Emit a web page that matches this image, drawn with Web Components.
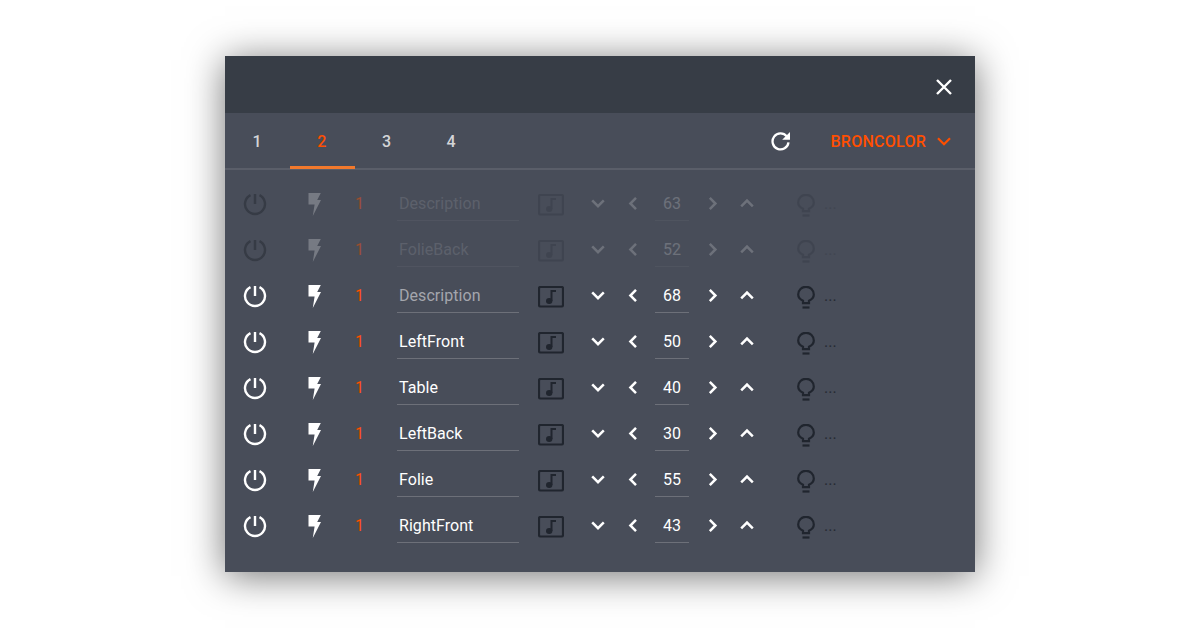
<!DOCTYPE html>
<html>
<head>
<meta charset="utf-8">
<title>Lights</title>
<style>
  html, body { margin: 0; height: 100%; background: #fff; }
  body { display: flex; justify-content: center; padding-top: 56px; box-sizing: border-box; overflow: hidden; font-family: Roboto, "Liberation Sans", sans-serif; }
</style>
</head>
<body>
<light-dialog>
  <tab-bar slot="tabs" brand="BRONCOLOR"></tab-bar>
  <light-row dim placeholder="Description" value="63"></light-row>
  <light-row dim placeholder="FolieBack" value="52"></light-row>
  <light-row placeholder="Description" value="68"></light-row>
  <light-row name="LeftFront" value="50"></light-row>
  <light-row name="Table" value="40"></light-row>
  <light-row name="LeftBack" value="30"></light-row>
  <light-row name="Folie" value="55"></light-row>
  <light-row name="RightFront" value="43"></light-row>
</light-dialog>

<script>
const ORANGE = '#ff4f00';

class LightDialog extends HTMLElement {
  constructor() {
    super();
    this.attachShadow({ mode: 'open' }).innerHTML = `
      <style>
        :host {
          display: block; width: 750px; height: 516px; background: #484d59;
          box-shadow: 0 4px 36px rgba(0,0,0,.55);
        }
        header { height: 57px; background: #373d46; display: flex; justify-content: flex-end; align-items: center; padding-right: 21px; }
        header svg { display: block; margin-top: 4px; }
        main { padding-top: 11px; }
      </style>
      <header>
        <svg width="20" height="20" viewBox="0 0 20 20" fill="none" stroke="#fff" stroke-width="2.4">
          <path d="M3 3l14 14M17 3L3 17"/>
        </svg>
      </header>
      <slot name="tabs"></slot>
      <main><slot></slot></main>`;
  }
}

class TabBar extends HTMLElement {
  constructor() {
    super();
    this.attachShadow({ mode: 'open' }).innerHTML = `
      <style>
        :host { display: flex; align-items: stretch; height: 57px; padding-top: 1px; box-sizing: border-box; border-bottom: 2px solid #5a5e69; color: #d4d5d8; font-size: 16px; }
        .tab { width: 64.5px; display: flex; align-items: center; justify-content: center; font-weight: 500; position: relative; letter-spacing: .2px; }
        .tab:first-child { width: 64px; }
        .tab.on { width: 65px; color: ${ORANGE}; }
        .tab.on::after { content: ""; position: absolute; left: 0; right: 0; bottom: -1px; height: 3px; background: #f2792c; }
        .spacer { flex: 1; }
        .reload { display: flex; align-items: center; margin-right: 40px; }
        .reload svg { display: block; }
        .brand { display: flex; align-items: center; gap: 11px; margin-right: 24px; color: ${ORANGE}; font-weight: 500; letter-spacing: .25px; }
        .brand svg { display: block; }
      </style>
      <div class="tab">1</div>
      <div class="tab on">2</div>
      <div class="tab">3</div>
      <div class="tab">4</div>
      <div class="spacer"></div>
      <div class="reload">
        <svg width="20" height="20" viewBox="0 0 20 20" fill="none">
          <path d="M15.800 5.400A8 8 0 1 0 17.500 11.400" stroke="#fff" stroke-width="2.300"/>
          <path d="M19 1v7.800H11.200z" fill="#fff"/>
        </svg>
      </div>
      <div class="brand"><span>${this.getAttribute('brand')}</span>
        <svg width="14" height="9" viewBox="0 0 14 9" fill="none" stroke="${ORANGE}" stroke-width="2.2"><path d="M1 1.3l6 6 6-6"/></svg>
      </div>`;
  }
}

class ChevronIcon extends HTMLElement {
  static paths = {
    down: 'M2.200 4.400L8 10.200l5.800-5.800',
    up: 'M3.200 10.400L9 4.600l5.800 5.800',
    left: 'M12 1.900L6.400 7.500l5.600 5.600',
    right: 'M5.800 1.900l5.600 5.600-5.600 5.600'
  };
  constructor() {
    super();
    const d = ChevronIcon.paths[this.getAttribute('dir')];
    this.attachShadow({ mode: 'open' }).innerHTML = `
      <style>
        :host { display: flex; width: 34px; justify-content: center; align-items: center; }
        svg { display: block; overflow: visible; }
      </style>
      <svg width="16" height="16" viewBox="0 0 16 16" fill="none" stroke="#fff" stroke-width="2.5"><path d="${d}"/></svg>`;
  }
}

class LightRow extends HTMLElement {
  constructor() {
    super();
    const name = this.getAttribute('name');
    const placeholder = this.getAttribute('placeholder');
    this.attachShadow({ mode: 'open' }).innerHTML = `
      <style>
        :host { display: block; height: 46px; font-size: 16px; color: #fff; --ink: #20252e; --power: #fff; }
        :host([dim]) { --power: #363b45; }
        :host([dim]) .bolt { opacity: .25; }
        :host([dim]) .num { opacity: .45; }
        :host([dim]) .field { opacity: .22; }
        :host([dim]) .mode, :host([dim]) .bulb, :host([dim]) .more { opacity: .2; }
        :host([dim]) chevron-icon { opacity: .2; }
        :host([dim]) .value { opacity: .2; }
        .row { display: flex; align-items: center; height: 100%; padding-left: 15px; }
        .cell { display: flex; justify-content: center; align-items: center; }
        svg { display: block; }
        .power { width: 30px; margin-right: 30px; margin-top: 2px; }
        .bolt { width: 30px; margin-right: 15px; }
        .num { width: 29px; margin-right: 23px; margin-top: -2px; color: ${ORANGE}; }
        .field { width: 122px; height: 32px; margin-top: 1px; margin-right: 19px; box-sizing: border-box; border-bottom: 1px solid #6d7079; padding-left: 2px; line-height: 29px; letter-spacing: .05px; }
        .field.ph { color: #a4a6ad; }
        .mode { width: 26px; margin-right: 17px; margin-top: 2px; }
        .value { width: 34px; height: 32px; margin: 1px 6px 0; box-sizing: border-box; border-bottom: 1px solid #6d7079; text-align: center; line-height: 29px; }
        .bulb { width: 30px; margin-left: 28px; margin-top: 4px; }
        .more { margin-left: 3px; margin-top: -2px; color: #262a33; }
      </style>
      <div class="row">
        <div class="cell power">
          <svg width="24" height="24" viewBox="0 0 24 24" fill="none" stroke="var(--power)" stroke-width="2.400">
            <path d="M7.500 2.100a10 10 0 1 0 9 0"/><path d="M12 1v10"/>
          </svg>
        </div>
        <div class="cell bolt">
          <svg width="14" height="24" viewBox="0 0 14 24"><path d="M0.500 1h12.300l-3.600 7h3.800L4.800 24l1.800-11.500H0.500z" fill="#fff"/></svg>
        </div>
        <div class="cell num">1</div>
        <div class="field ${name ? '' : 'ph'}">${name || placeholder}</div>
        <div class="cell mode">
          <svg width="26" height="22" viewBox="0 0 26 22" fill="none">
            <rect x="1" y="1" width="24" height="19.500" rx="1.500" stroke="var(--ink)" stroke-width="2.200"/>
            <ellipse cx="11.200" cy="15" rx="3.200" ry="3" fill="var(--ink)"/>
            <path d="M13.500 15V5h4.500" stroke="var(--ink)" stroke-width="2"/>
          </svg>
        </div>
        <chevron-icon dir="down"></chevron-icon>
        <chevron-icon dir="left"></chevron-icon>
        <div class="value">${this.getAttribute('value')}</div>
        <chevron-icon dir="right"></chevron-icon>
        <chevron-icon dir="up"></chevron-icon>
        <div class="cell bulb">
          <svg width="18" height="24" viewBox="0 0 18 24" fill="none" stroke="var(--ink)" stroke-width="2.200">
            <path d="M6 17.200v-2.400C3.200 13.500 1.200 11.300 1.200 8.600a7.800 7.800 0 0 1 15.600 0c0 2.700-2 4.900-4.800 6.200v2.400z"/>
            <path d="M5.500 21.500h7"/>
          </svg>
        </div>
        <div class="more">...</div>
      </div>`;
  }
}

customElements.define('chevron-icon', ChevronIcon);
customElements.define('light-row', LightRow);
customElements.define('tab-bar', TabBar);
customElements.define('light-dialog', LightDialog);
</script>
</body>
</html>
